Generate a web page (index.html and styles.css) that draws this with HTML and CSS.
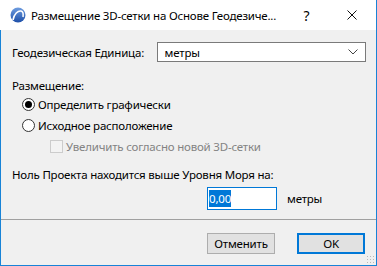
FILE: index.html
```html
<!DOCTYPE html>
<html lang="ru">
<head>
  <meta charset="UTF-8">
  <title>Размещение 3D-сетки</title>
  <link rel="stylesheet" href="styles.css">
</head>
<body>
  <div class="dialog">
    <header class="titlebar">
      <svg class="app-icon" width="16" height="16" viewBox="0 0 16 16">
        <defs>
          <linearGradient id="ball" x1="0" y1="0" x2="0" y2="1">
            <stop offset="0" stop-color="#6f9de0"/>
            <stop offset="1" stop-color="#1d4fa8"/>
          </linearGradient>
        </defs>
        <circle cx="8" cy="8" r="7.5" fill="url(#ball)"/>
        <path d="M3 13 C4 7 8 3.5 11 4 C13 4.5 13.5 7 13 10" fill="none" stroke="#fff" stroke-width="1.6"/>
      </svg>
      <span class="title-text">Размещение 3D-сетки на Основе Геодезиче...</span>
      <span class="title-btn help">?</span>
      <span class="title-btn close">
        <svg width="10" height="10" viewBox="0 0 10 10"><path d="M0.5 0.5 L9.5 9.5 M9.5 0.5 L0.5 9.5" stroke="#111" stroke-width="1"/></svg>
      </span>
    </header>

    <main class="dialog-body">
      <div class="unit-row">
        <span class="unit-label">Геодезическая Единица:</span>
        <div class="select">
          <span>метры</span>
          <svg width="10" height="6" viewBox="0 0 10 6"><path d="M0.5 0.5 L5 5 L9.5 0.5" fill="none" stroke="#444" stroke-width="1"/></svg>
        </div>
      </div>

      <div class="section-label">Размещение:</div>
      <div class="option">
        <span class="radio checked"></span>
        <span>Определить графически</span>
      </div>
      <div class="option">
        <span class="radio"></span>
        <span>Исходное расположение</span>
      </div>
      <div class="option sub disabled">
        <span class="checkbox"></span>
        <span>Увеличить согласно новой 3D-сетки</span>
      </div>

      <div class="section-label elevation-label">Ноль Проекта находится выше Уровня Моря на:</div>
      <div class="elevation-row">
        <div class="text-input"><span class="selected">0,00</span></div>
        <span class="unit-text">метры</span>
      </div>
    </main>

    <footer class="dialog-footer">
      <button class="btn">Отменить</button>
      <button class="btn default">OK</button>
      <span class="grip"></span>
    </footer>
  </div>
</body>
</html>
```

FILE: styles.css
```css
:root {
  --window-border: #1883d7;
  --face: #f0f0f0;
  --text: #000000;
  --disabled-text: #838383;
  --accent: #0078d7;
  --control-border: #7a7a7a;
  --button-bg: #e1e1e1;
  --button-border: #adadad;
}

body {
  margin: 0;
  font-family: 'Noto Sans', 'Open Sans', Arial, sans-serif;
  font-size: 11.5px;
  letter-spacing: -0.2px;
  color: var(--text);
}

.dialog {
  width: 377px;
  height: 266px;
  box-sizing: border-box;
  border: 1px solid var(--window-border);
  border-top: none;
  background: var(--face);
  display: flex;
  flex-direction: column;
}

/* Title bar */
.titlebar {
  height: 30px;
  flex: none;
  background: #ffffff;
  display: flex;
  align-items: center;
  margin: 0 -1px 0 -1px;
  padding: 0 2px 0 10px;
  border-right: 1px solid var(--window-border);
}

.app-icon {
  flex: none;
  margin-right: 5px;
}

.title-text {
  flex: 1;
  white-space: nowrap;
}

.title-btn {
  width: 45px;
  text-align: center;
  font-size: 14px;
}

.close {
  display: flex;
  justify-content: center;
  align-items: center;
}

/* Body */
.dialog-body {
  flex: 1;
  padding: 12px 10px 0 11px;
}

.unit-row {
  display: flex;
  align-items: center;
}

.unit-label {
  width: 145px;
}

.select {
  width: 210px;
  height: 20px;
  box-sizing: border-box;
  border: 1px solid var(--control-border);
  background: #ffffff;
  display: flex;
  align-items: center;
  justify-content: space-between;
  padding: 0 7px 0 7px;
}

.section-label {
  margin-top: 16px;
  line-height: 16px;
}

.option {
  display: flex;
  align-items: center;
  height: 21px;
  padding-left: 10px;
}

.option.sub {
  padding-left: 38px;
  height: 20px;
}

.option.disabled {
  color: var(--disabled-text);
}

.radio {
  width: 11px;
  height: 11px;
  border: 1px solid #333333;
  border-radius: 50%;
  background: #ffffff;
  margin-right: 3px;
  position: relative;
}

.radio.checked::after {
  content: "";
  position: absolute;
  left: 2px;
  top: 2px;
  width: 7px;
  height: 7px;
  border-radius: 50%;
  background: #000000;
}

.checkbox {
  width: 11px;
  height: 11px;
  border: 1px solid #cccccc;
  background: #f3f3f3;
  margin-right: 3px;
}

.elevation-label {
  margin-top: 11px;
}

.elevation-row {
  display: flex;
  align-items: center;
  margin-top: 4px;
  padding-left: 195px;
}

.text-input {
  width: 70px;
  height: 23px;
  box-sizing: border-box;
  border: 1px solid var(--accent);
  background: #ffffff;
  display: flex;
  align-items: center;
  padding-left: 1px;
}

.selected {
  background: var(--accent);
  color: #ffffff;
  line-height: 17px;
}

.unit-text {
  margin-left: 10px;
}

/* Footer */
.dialog-footer {
  flex: none;
  height: 46px;
  box-sizing: border-box;
  border-top: 1px solid #a0a0a0;
  display: flex;
  justify-content: flex-end;
  align-items: flex-start;
  padding: 13px 11px 0 0;
  gap: 22px;
  position: relative;
}

.btn {
  width: 68px;
  height: 21px;
  box-sizing: border-box;
  background: var(--button-bg);
  border: 1px solid var(--button-border);
  font-family: inherit;
  font-size: 11.5px;
  letter-spacing: -0.2px;
  color: var(--text);
  padding: 0;
}

.btn.default {
  border: 2px solid var(--accent);
}

.grip {
  position: absolute;
  right: 2px;
  bottom: 2px;
  width: 8px;
  height: 8px;
  background-image: radial-gradient(circle, #b8b8b8 1px, transparent 1px);
  background-size: 3px 3px;
}
```
